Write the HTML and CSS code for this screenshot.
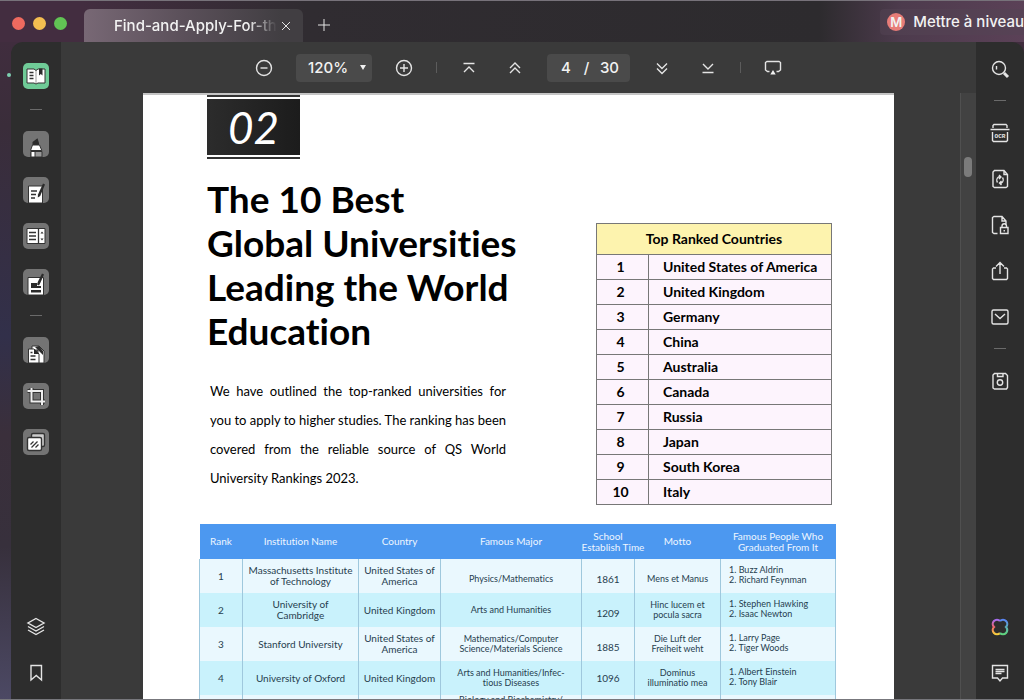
FILE: index.html
```html
<!DOCTYPE html>
<html lang="fr">
<head>
<meta charset="utf-8">
<title>Find-and-Apply-For-th</title>
<link rel="stylesheet" href="styles.css">
</head>
<body>
<header class="titlebar">
  <div class="lights"><i class="light red"></i><i class="light yellow"></i><i class="light green"></i></div>
  <div class="tab">
    <span class="tab-title">Find-and-Apply-For-th</span>
    <button class="plain" aria-label="Close tab"><svg width="10" height="10" viewBox="0 0 10 10"><path d="M1 1l8 8M9 1L1 9"/></svg></button>
  </div>
  <button class="plain new-tab" aria-label="New tab"><svg width="12" height="12" viewBox="0 0 12 12"><path d="M6 0v12M0 6h12"/></svg></button>
  <button class="upgrade"><span class="avatar">M</span>Mettre à niveau</button>
</header>

<div class="workspace">
  <nav class="sidebar left" aria-label="Tools">
    <button class="tool active" aria-label="Reader"><svg viewBox="0 0 26 26"><path class="w" d="M4 6h7l2 1.500 2-1.500h7v14h-7l-2 1-2-1H4z"/><path class="d" d="M6.500 9.500h4M6.500 12.500h4M6.500 15.500h4"/><path class="d thin" d="M13 7.500V20"/><path class="k" d="M16 5.500h3.500v7l-1.700-1.500-1.800 1.500z"/></svg></button>
    <hr>
    <button class="tool" aria-label="Highlight"><svg viewBox="0 0 26 26"><path class="k" d="M9.500 14v-3l5-3.800L16 12v2z"/><path class="w" d="M9.500 14h7l2.300 5.500H7.500z"/><path class="g" d="M8 20.500h11V26H8z"/><path class="w" d="M8 20.500h4V26H8z"/></svg></button>
    <button class="tool" aria-label="Edit"><svg viewBox="0 0 26 26"><path class="w" d="M5.500 9h14v17h-14z"/><path class="d" d="M8 14h6M8 17.500h5M8 21h4"/><path class="k" d="M20 6.500l2 1-4.800 11.500-2.400 1.500.2-3z"/></svg></button>
    <button class="tool" aria-label="Form"><svg viewBox="0 0 26 26"><path class="w" d="M4 5.500h18v15H4z"/><path class="d" d="M6 9.500h7M6 13h7M6 16.500h7M15.500 5v16"/><path class="k" d="M17.500 10.500h3L19 8.500zM17.500 15.500h3L19 17.500z"/></svg></button>
    <button class="tool" aria-label="Sign"><svg viewBox="0 0 26 26"><path class="w" d="M5 8.500h15.500V26H5z"/><path class="k" d="M8 14h6v3h4v2H8zM8 21h10v2.500H8zM19 4.500l2 1-3.500 8-1.500 3-2-1 1-3z"/></svg></button>
    <hr>
    <button class="tool" aria-label="Pages"><svg viewBox="0 0 26 26"><path class="w" d="M9 9h7l5 5v12h-6V13H9z"/><path class="k" d="M12 10l8 8v-4l-4-5z"/><path class="w" d="M5.500 12H11l5 5v9H5.500z"/><path class="k" d="M11 12l5 5h-5z"/><path class="d" d="M7.500 15.500h2M7.500 19h5M7.500 22.500h5"/></svg></button>
    <button class="tool" aria-label="Crop"><svg viewBox="0 0 26 26"><path d="M8.500 5v13.500H22M4.500 8H19v14" fill="none" stroke="#333" stroke-width="4"/><path d="M8.500 5v13.500H22M4.500 8H19v14" fill="none" stroke="#eee" stroke-width="2"/></svg></button>
    <button class="tool" aria-label="Watermark"><svg viewBox="0 0 26 26"><rect x="8.500" y="4.500" width="13" height="13" rx="1.500" fill="#ccc" stroke="#333"/><rect x="4.500" y="8.500" width="14" height="13" rx="1.500" fill="#fff" stroke="#333"/><path class="d" d="M7.500 15.500l3-3M8.500 18.500l6-6M12.500 18.500l3-3"/></svg></button>
    <button class="tool line push" aria-label="Layers"><svg viewBox="0 0 26 26"><path d="M13 4.500l8 4.500-8 4.500L5 9zM5 12.500l8 4.500 8-4.500M5 16l8 4.500 8-4.500"/></svg></button>
    <button class="tool line" aria-label="Bookmarks"><svg viewBox="0 0 26 26"><path d="M8 5.500h10.500V20l-5.250-4.500L8 20z"/></svg></button>
  </nav>

  <main class="center">
    <div class="toolbar">
      <button class="icon" aria-label="Zoom out"><svg viewBox="0 0 18 18"><circle cx="9" cy="9" r="7.500"/><path d="M5.500 9h7"/></svg></button>
      <div class="field zoom">
        <select aria-label="Zoom"><option>120%</option></select>
        <svg class="caret" width="6" height="5" viewBox="0 0 6 5"><path d="M0 0h6L3 5z"/></svg>
      </div>
      <button class="icon" aria-label="Zoom in"><svg viewBox="0 0 18 18"><circle cx="9" cy="9" r="7.500"/><path d="M5 9h8M9 5v8"/></svg></button>
      <i class="bar"></i>
      <div class="pair">
        <button class="icon" aria-label="First page"><svg viewBox="0 0 18 18"><path d="M3.500 4.500h11M4 13l5-5 5 5"/></svg></button>
        <button class="icon" aria-label="Previous page"><svg viewBox="0 0 18 18"><path d="M4 9l5-5 5 5M4 14l5-5 5 5"/></svg></button>
      </div>
      <div class="field pager"><input aria-label="Page" value="4"><span>/</span><span>30</span></div>
      <div class="pair">
        <button class="icon" aria-label="Next page"><svg viewBox="0 0 18 18"><path d="M4 4.500l5 5 5-5M4 9.500l5 5 5-5"/></svg></button>
        <button class="icon" aria-label="Last page"><svg viewBox="0 0 18 18"><path d="M4 5l5 5 5-5M3.500 13.500h11"/></svg></button>
      </div>
      <i class="bar"></i>
      <button class="icon" aria-label="Present"><svg viewBox="0 0 18 18"><path d="M5.500 12.500H3.500l-2-1.500V3.500l1.500-1h12l1.500 1V11l-2 1.500h-2"/><path class="fill" d="M9 11l2.700 4.500H6.300z"/></svg></button>
    </div>

    <div class="viewer">
      <article class="paper">
        <div class="chapter"><span>02</span></div>
        <div class="intro">
          <div class="lead">
            <h1>The 10 Best<br>Global Universities<br>Leading the World<br>Education</h1>
            <p><span>We have outlined the top-ranked universities for</span> <span>you to apply to higher studies. The ranking has been</span> <span>covered from the reliable source of QS World</span> University Rankings 2023.</p>
          </div>
          <table class="ranking">
            <thead><tr><th colspan="2">Top Ranked Countries</th></tr></thead>
            <tbody>
              <tr><td>1</td><td>United States of America</td></tr>
              <tr><td>2</td><td>United Kingdom</td></tr>
              <tr><td>3</td><td>Germany</td></tr>
              <tr><td>4</td><td>China</td></tr>
              <tr><td>5</td><td>Australia</td></tr>
              <tr><td>6</td><td>Canada</td></tr>
              <tr><td>7</td><td>Russia</td></tr>
              <tr><td>8</td><td>Japan</td></tr>
              <tr><td>9</td><td>South Korea</td></tr>
              <tr><td>10</td><td>Italy</td></tr>
            </tbody>
          </table>
        </div>
        <table class="schools">
          <colgroup><col class="c1"><col class="c2"><col class="c3"><col class="c4"><col class="c5"><col class="c6"><col></colgroup>
          <thead><tr><th>Rank</th><th>Institution Name</th><th>Country</th><th>Famous Major</th><th class="wide">School<br>Establish Time</th><th>Motto</th><th>Famous People Who<br>Graduated From It</th></tr></thead>
          <tbody>
            <tr><td>1</td><td>Massachusetts Institute<br>of Technology</td><td>United States of<br>America</td><td class="fine low">Physics/Mathematics</td><td class="low">1861</td><td class="fine low">Mens et Manus</td><td class="fine people">1. Buzz Aldrin<br>2. Richard Feynman</td></tr>
            <tr><td>2</td><td>University of<br>Cambridge</td><td>United Kingdom</td><td class="fine">Arts and Humanities</td><td class="low">1209</td><td class="fine">Hinc lucem et<br>pocula sacra</td><td class="fine people">1. Stephen Hawking<br>2. Isaac Newton</td></tr>
            <tr><td>3</td><td>Stanford University</td><td>United States of<br>America</td><td class="fine">Mathematics/Computer<br>Science/Materials Science</td><td class="low">1885</td><td class="fine">Die Luft der<br>Freiheit weht</td><td class="fine people">1. Larry Page<br>2. Tiger Woods</td></tr>
            <tr><td>4</td><td>University of Oxford</td><td>United Kingdom</td><td class="fine">Arts and Humanities/Infec-<br>tious Diseases</td><td>1096</td><td class="fine">Dominus<br>illuminatio mea</td><td class="fine people">1. Albert Einstein<br>2. Tony Blair</td></tr>
            <tr><td></td><td></td><td></td><td class="fine top">Biology and Biochemistry/</td><td></td><td></td><td></td></tr>
          </tbody>
        </table>
      </article>
      <div class="track"><i class="thumb"></i></div>
    </div>
  </main>

  <nav class="sidebar right" aria-label="Actions">
    <button class="tool line" aria-label="Search"><svg viewBox="0 0 26 26"><circle cx="12" cy="12" r="6.500"/><path d="M9.500 10v3.500"/><path class="thick" d="M17 17l4 4"/></svg></button>
    <hr>
    <button class="tool line" aria-label="OCR"><svg viewBox="0 0 26 26"><path d="M6 8V5.500l1-1h12l1 1V8M3.500 9.500h19M5.500 12v8.500l1 1h13l1-1V12"/><text x="13" y="18">OCR</text></svg></button>
    <button class="tool line" aria-label="Convert"><svg viewBox="0 0 26 26"><path d="M17 4.500H7.500l-1.500 1.500v14.500l1.500 1h11.500l1.500-1V8.500zM17 4.500V8.500h3.500M10.500 16.500a4 4 0 0 1 1-5.500h2M12 9l2 2-2 2M15.500 11.500a4 4 0 0 1-1 5.500h-2M14.500 15l-2 2 2 2"/></svg></button>
    <button class="tool line" aria-label="Protect"><svg viewBox="0 0 26 26"><path d="M10.500 21.500H7l-1.500-1V5.500l1.500-1h8l4 4.500v3M15 4.500V9h4M13.500 15.500h7.500v6h-7.500zM15 15.500v-1.500a2.250 2.250 0 0 1 4.500 0v1.500M17.250 18v1.500"/></svg></button>
    <button class="tool line" aria-label="Share"><svg viewBox="0 0 26 26"><path d="M9 10H6.500l-1 1v9.500l1 1h13l1-1V11l-1-1H17M13 16V4.500M9 8.500l4-4 4 4"/></svg></button>
    <button class="tool line" aria-label="Mail"><svg viewBox="0 0 26 26"><rect x="5" y="6" width="16" height="14" rx="1.500"/><path d="M8 10l5 4.500 5-4.500"/></svg></button>
    <hr>
    <button class="tool line" aria-label="Save"><svg viewBox="0 0 26 26"><path d="M7.500 5.500h11l2 2v12l-1 1.500h-12L6 20V7zM10.500 5.500v3h5.500v-3"/><circle cx="13" cy="14.500" r="2.700"/></svg></button>
    <button class="tool line push" aria-label="Assistant"><svg viewBox="0 0 26 26"><defs><linearGradient id="warm" x1="0" y1="0" x2="0" y2="1"><stop offset="0" stop-color="#a66cf0"/><stop offset=".5" stop-color="#f0646a"/><stop offset="1" stop-color="#f7cf3d"/></linearGradient><linearGradient id="cool" x1="0" y1="0" x2="0" y2="1"><stop offset="0" stop-color="#5a86f5"/><stop offset="1" stop-color="#5fd47c"/></linearGradient></defs><path class="warm" d="M13 7A4 4 0 1 0 7 13A4 4 0 1 0 13 19"/><path class="cool" d="M13 7A4 4 0 1 1 19 13A4 4 0 1 1 13 19"/></svg></button>
    <button class="tool line" aria-label="Comments"><svg viewBox="0 0 26 26"><path d="M5.500 5.500h15v12.500h-5L13 21l-2.500-3h-5zM8.500 9.500h9M8.500 11.500h9M8.500 13.500h6"/></svg></button>
  </nav>
</div>
</body>
</html>
```
FILE: styles.css
```css
* { box-sizing: border-box; }
body {
  margin: 0;
  height: 100vh;
  display: flex;
  flex-direction: column;
  overflow: hidden;
  background: linear-gradient(180deg, #432d40 0%, #3a2d3a 18%, #32304a 48%, #3a2f3b 62%, #37303c 78%, #4c4964 100%);
  color: #f2f2f2;
  font-family: Inter, sans-serif;
  border-bottom: 1px solid #77777c;
}
button { padding: 0; border: 0; background: none; color: inherit; font: inherit; }
svg { display: block; fill: none; stroke: #e4e4e4; }

.titlebar {
  flex: none;
  display: flex;
  align-items: center;
  height: 42px;
  border-top: 1px solid #77727a;
  background: linear-gradient(90deg, #432d40 0%, #432d40 8%, #302c31 30%, #2d2b2e 80%, #4d3b4d 88%, #5b4157 100%);
}
.lights { display: flex; gap: 8px; padding: 4px 0 0 12px; }
.light { width: 13px; height: 13px; border-radius: 50%; }
.red { background: #ee6a5f; }
.yellow { background: #f4be50; }
.green { background: #61c454; }
.tab {
  align-self: flex-end;
  display: flex;
  align-items: center;
  width: 219px;
  height: 33px;
  margin-left: 17px;
  padding: 0 12px 0 30px;
  gap: 4px;
  border-radius: 6px 6px 0 0;
  background: linear-gradient(90deg, #786875, #5b505a 45%, #413e42 90%);
}
.tab-title {
  flex: 1;
  overflow: hidden;
  white-space: nowrap;
  font-size: 15px;
  font-weight: 500;
  -webkit-mask-image: linear-gradient(90deg, #000 82%, transparent);
  mask-image: linear-gradient(90deg, #000 82%, transparent);
}
.plain { display: grid; place-items: center; }
.new-tab { margin: 7px 0 0 15px; }
.upgrade {
  display: flex;
  align-items: center;
  gap: 8px;
  height: 26px;
  margin-left: auto;
  padding-left: 7px;
  border-radius: 4px 0 0 4px;
  background: #54435480;
  font-size: 15px;
  font-weight: 500;
  white-space: nowrap;
}
.avatar {
  width: 18px;
  height: 18px;
  border-radius: 50%;
  background: #e77c78;
  font-size: 13px;
  font-weight: 600;
  line-height: 18px;
  text-align: center;
}

.workspace { flex: 1; min-height: 0; display: flex; padding-left: 11px; }
.sidebar {
  flex: none;
  display: flex;
  flex-direction: column;
  align-items: center;
  gap: 20px;
  background: #2d2d2d;
}
.left { position: relative; width: 50px; padding: 21px 0 13px; border-radius: 12px 0 0 0; }
.left::before {
  content: "";
  position: absolute;
  left: -4px;
  top: 31px;
  width: 4px;
  height: 4px;
  border-radius: 50%;
  background: #7cd0b0;
}
.right { width: 48px; padding: 14px 0 13px; border-radius: 0 12px 0 0; }
.sidebar hr { width: 12px; height: 2px; margin: 0; border: 0; border-top: 1px solid #6a6a6a; }
.right hr { margin: -2px 0; }
.tool { flex: none; width: 26px; height: 26px; border-radius: 5px; background: #747474; overflow: hidden; }
.tool.active { background: #6fcb97; }
.tool.line { background: none; }
.tool svg { stroke-width: 1.4; }
.push { margin-top: auto; }
.w { fill: #fff; stroke: #333; stroke-width: 1; }
.k { fill: #2b2b2b; stroke: none; }
.g { fill: #999; stroke: #333; stroke-width: 1; }
.d { stroke: #333; stroke-width: 1.3; }
.thin { stroke-width: .5; }
.thick { stroke-width: 3; }
.warm { stroke: url(#warm); stroke-width: 2.2; }
.cool { stroke: url(#cool); stroke-width: 2.2; }
.tool text { fill: #e8e8e8; stroke: none; font: 700 6px "Liberation Mono", monospace; text-anchor: middle; }

.center { flex: 1; min-width: 0; display: flex; flex-direction: column; background: #3a3a3a; }
.toolbar { flex: none; display: flex; align-items: center; justify-content: center; gap: 23px; height: 51px; }
.pair { display: flex; gap: 28px; }
.icon { width: 18px; height: 18px; }
.icon svg { stroke-width: 1.4; }
.bar { width: 1px; height: 11px; background: #5c5c5c; }
.field { display: flex; align-items: center; height: 28px; border-radius: 4px; background: #4a4a4a; font-size: 15px; font-weight: 500; }
.zoom { width: 76px; padding: 0 6px 0 12px; }
.zoom select { appearance: none; flex: 1; min-width: 0; padding: 0; border: 0; background: none; color: inherit; font: inherit; }
.caret path, .fill { fill: #f0f0f0; stroke: none; }
.pager { width: 83px; padding: 0 11px 0 12px; justify-content: space-between; }
.pager input { width: 14px; padding: 0; border: 0; background: none; color: inherit; font: inherit; text-align: center; }

.viewer { flex: 1; min-height: 0; display: flex; }
.paper {
  flex: 1;
  min-width: 0;
  margin: 0 66px 0 82px;
  padding: 0 58px 0 56px;
  overflow: hidden;
  border-top: 2px solid #c4c4c4;
  background: #fff;
  color: #000;
  font-family: Lato, sans-serif;
  font-variant-ligatures: none;
}
.track { flex: none; width: 16px; padding: 64px 4px 0 3px; border-left: 1px solid #505050; background: #424242; }
.thumb { display: block; height: 20px; border-radius: 4px; background: #7b7b7b; }

.chapter {
  width: 93px;
  margin-left: 8px;
  padding: 2px 0;
  border-top: 2px solid #333;
  border-bottom: 2px solid #333;
}
.chapter span {
  display: block;
  background: linear-gradient(90deg, #2c2c2c, #1c1c1c);
  color: #fff;
  font-size: 44px;
  line-height: 56px;
  font-style: italic;
  text-align: center;
}
.intro { display: flex; justify-content: space-between; padding: 18px 4px 0 8px; }
h1 { margin: 0; font-size: 37px; line-height: 44px; font-weight: 700; white-space: nowrap; }
.lead p { width: 299px; margin: 24px 0 0; padding-left: 3px; font-size: 13px; line-height: 29px; }
.lead p span { display: block; text-align-last: justify; white-space: nowrap; }

table { border-collapse: collapse; }
.ranking { width: 236px; margin-top: 46px; font-size: 14px; line-height: 16px; font-weight: 700; background: #fdf4fd; }
.ranking th { height: 31px; padding: 0; border: 1px solid #777; background: #fdf3ae; }
.ranking td { height: 25px; padding: 0 0 0 14px; border: 1px solid #777; }
.ranking td:first-child { width: 52px; padding: 0 4px 0 0; text-align: center; }

.schools { width: 100%; margin-top: 19px; table-layout: fixed; color: #27404f; font-size: 10px; line-height: 11px; text-align: center; white-space: nowrap; }
.c1 { width: 43px; }
.c2 { width: 116px; }
.c3 { width: 82px; }
.c4 { width: 141px; }
.c5 { width: 53px; }
.c6 { width: 86px; }
.schools th { height: 35px; padding: 0; background: #4c98f0; color: #eef6ff; font-weight: 400; }
.schools td { height: 34px; padding: 0; border-left: 1px solid #9fc8dd; border-right: 1px solid #9fc8dd; }
.schools tbody tr { background: #eaf8fe; }
.schools tbody tr:nth-child(even) { background: #c9f2fc; }
.schools .fine { font-size: 9px; line-height: 10px; }
.schools .low { padding-top: 6px; }
.schools .top { vertical-align: top; }
.schools .people { padding: 0 0 3px 8px; text-align: left; }
```
